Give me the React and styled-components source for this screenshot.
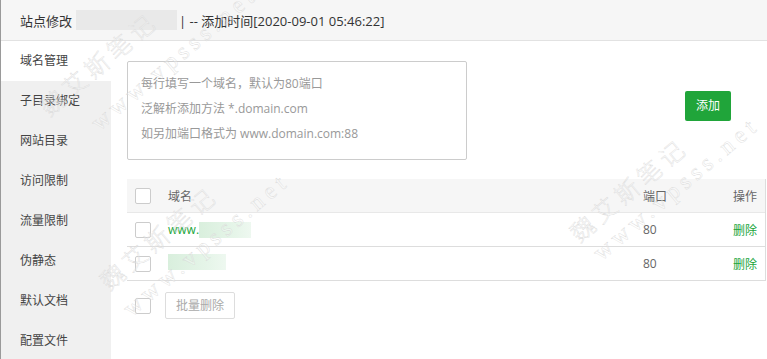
import React from "react";
import styled, { createGlobalStyle } from "styled-components";

const GlobalStyle = createGlobalStyle`
  html, body {
    margin: 0;
    padding: 0;
    background: #fff;
    font-family: "Open Sans", "Noto Sans CJK SC", sans-serif;
    font-size: 12px;
    color: #555;
  }
`;

const menu = ["域名管理", "子目录绑定", "网站目录", "访问限制", "流量限制", "伪静态", "默认文档", "配置文件"];

const domains = [
  { prefix: "www.", blurWidth: 52, port: 80 },
  { prefix: "", blurWidth: 58, port: 80 },
];

// watermark tiles: x, y = lower-left start of the rotated line
const marks = [
  { x: 52, y: 122, text: "魏艾斯笔记" },
  { x: 102, y: 136, text: "www.vpsss.net" },
  { x: 112, y: 296, text: "魏艾斯笔记" },
  { x: 134, y: 322, text: "www.vpsss.net" },
  { x: 582, y: 248, text: "魏艾斯笔记" },
  { x: 604, y: 266, text: "www.vpsss.net" },
];

const App = () => {
  return (
    <Page>
      <GlobalStyle />
      <Header>
        站点修改<HiddenName />| -- 添加时间[2020-09-01 05:46:22]
      </Header>
      <Body>
        <Sidebar>
          {menu.map((item, i) => (
            <MenuItem key={item} active={i === 0}>
              {item}
            </MenuItem>
          ))}
        </Sidebar>
        <Content>
          <FormRow>
            <Textarea>
              <p>每行填写一个域名，默认为80端口</p>
              <p>泛解析添加方法 *.domain.com</p>
              <p>如另加端口格式为 www.domain.com:88</p>
            </Textarea>
            <AddButton>添加</AddButton>
          </FormRow>
          <Table>
            <HeadRow>
              <CheckCell>
                <Check />
              </CheckCell>
              <NameCell>域名</NameCell>
              <PortCell>端口</PortCell>
              <ActionCell>操作</ActionCell>
            </HeadRow>
            {domains.map((d, i) => (
              <Row key={i}>
                <CheckCell>
                  <Check />
                </CheckCell>
                <NameCell>
                  <DomainLink>
                    {d.prefix}
                    <GreenBlur style={{ width: d.blurWidth }} />
                  </DomainLink>
                </NameCell>
                <PortCell>{d.port}</PortCell>
                <ActionCell>
                  <DeleteLink>删除</DeleteLink>
                </ActionCell>
              </Row>
            ))}
          </Table>
          <BatchRow>
            <Check />
            <BatchButton>批量删除</BatchButton>
          </BatchRow>
        </Content>
      </Body>
      {marks.map((m, i) => (
        <Watermark key={i} style={{ left: m.x, top: m.y - 28 }}>
          {m.text}
        </Watermark>
      ))}
    </Page>
  );
};

const Page = styled.div`
  position: relative;
  width: 767px;
  height: 359px;
  overflow: hidden;
  border-left: 1px solid #9a9a9a;
  box-sizing: border-box;
`;

const Header = styled.div`
  height: 40px;
  background: #f6f6f6;
  border-bottom: 1px solid #e2e2e2;
  display: flex;
  align-items: center;
  padding-left: 19px;
  font-size: 13px;
  color: #333;
`;

const HiddenName = styled.span`
  display: inline-block;
  width: 101px;
  height: 20px;
  background: #e9e9e9;
  margin: 0 2px 0 4px;
`;

const Body = styled.div`
  display: flex;
  height: 318px;
`;

const Sidebar = styled.div`
  width: 110px;
  background: #f0f0f0;
  flex-shrink: 0;
`;

const MenuItem = styled.div`
  height: 40px;
  line-height: 40px;
  padding-left: 19px;
  font-size: 12px;
  color: #444;
  background: ${(p) => (p.active ? "#fff" : "transparent")};
`;

const Content = styled.div`
  flex: 1;
  padding: 20px 0 0 16px;
`;

const FormRow = styled.div`
  display: flex;
  align-items: flex-start;
`;

const Textarea = styled.div`
  width: 340px;
  height: 99px;
  box-sizing: border-box;
  border: 1px solid #ccc;
  border-radius: 2px;
  padding: 9px 14px 8px 13px;
  color: #999;
  p {
    margin: 0;
    line-height: 25px;
  }
`;

const AddButton = styled.div`
  margin: 30px 36px 0 auto;
  width: 46px;
  height: 30px;
  line-height: 30px;
  text-align: center;
  background: #20a53a;
  color: #fff;
  border-radius: 2px;
  font-size: 12px;
`;

const Table = styled.div`
  margin-top: 19px;
  border-right: 1px solid #ddd;
  margin-right: 1px;
`;

const Row = styled.div`
  display: flex;
  align-items: center;
  height: 33px;
  border-bottom: 1px solid #ddd;
`;

const HeadRow = styled(Row)`
  background: #f6f6f6;
  border-bottom: 1px solid #e8e8e8;
  color: #666;
`;

const CheckCell = styled.div`
  width: 41px;
  padding-left: 8px;
  box-sizing: border-box;
  display: flex;
  align-items: center;
`;

const Check = styled.span`
  display: inline-block;
  width: 14px;
  height: 14px;
  border: 1px solid #ccc;
  border-radius: 2px;
  background: #fff;
`;

const NameCell = styled.div`
  flex: 1;
`;

const PortCell = styled.div`
  width: 64px;
  color: #666;
`;

const ActionCell = styled.div`
  width: 50px;
  text-align: right;
  padding-right: 8px;
  color: #666;
`;

const DomainLink = styled.span`
  color: #20a53a;
  display: inline-flex;
  align-items: center;
`;

const GreenBlur = styled.span`
  display: inline-block;
  height: 16px;
  background: linear-gradient(90deg, #d9efdd, #e6f5e9 70%, #eef8f0);
`;

const DeleteLink = styled.span`
  color: #20a53a;
`;

const BatchRow = styled.div`
  display: flex;
  align-items: center;
  margin-top: 11px;
  padding-left: 8px;
  gap: 14px;
`;

const BatchButton = styled.div`
  height: 25px;
  line-height: 25px;
  padding: 0 10px;
  border: 1px solid #ddd;
  border-radius: 2px;
  color: #aaa;
  background: #fff;
`;

const Watermark = styled.div`
  position: absolute;
  height: 28px;
  line-height: 28px;
  transform: rotate(-40deg);
  transform-origin: left bottom;
  font-size: 24px;
  font-weight: 300;
  letter-spacing: 5px;
  color: rgba(255, 255, 255, 0.3);
  -webkit-text-stroke: 0.35px #d6d6d6;
  white-space: nowrap;
  pointer-events: none;
  font-family: "Liberation Serif", "Noto Sans CJK SC", serif;
`;

export default App;
